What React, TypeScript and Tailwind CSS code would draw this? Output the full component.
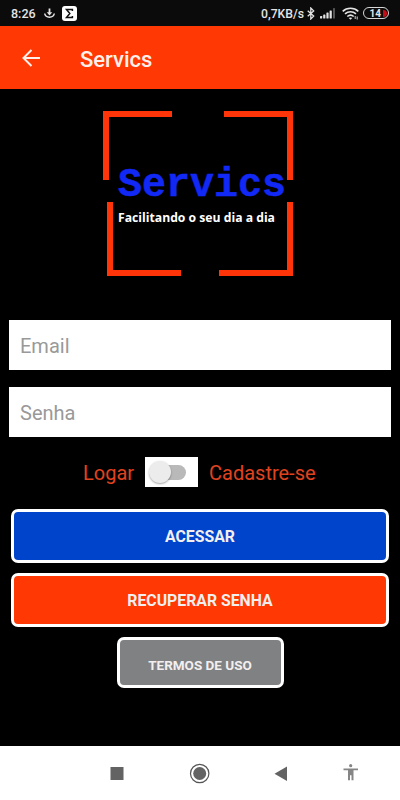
function StatusBar() {
  return (
    <div className="flex h-[26px] items-center justify-between bg-[#0b0b0b] pl-[11px] pr-[11px] text-[#e4e4e4]">
      <div className="flex items-center pt-[2px]">
        <span className="w-[33px] text-[12.5px] font-medium leading-none">8:26</span>
        <svg width="11" height="12" viewBox="0 0 11 12" fill="none" stroke="currentColor">
          <path d="M5.5 0.5v5" strokeWidth="1.8" />
          <path d="M2.7 4.2h5.6L5.5 7.4z" fill="currentColor" stroke="none" />
          <path d="M0.7 5.5c0.8 4.9 8.8 4.9 9.6 0" strokeWidth="1.5" />
        </svg>
        <svg width="15" height="15" viewBox="0 0 15 15" className="-mt-px ml-[7px]">
          <rect width="15" height="15" rx="3" fill="#fff" />
          <path d="M10.4 5.1V3.6H4.5l3.3 3.9-3.3 3.9h5.9V9.9" fill="none" stroke="#111" strokeWidth="1.5" />
        </svg>
      </div>
      <div className="flex items-center pt-px">
        <span className="w-[45px] whitespace-nowrap pt-px text-[12.2px] font-medium leading-none">0,7KB/s</span>
        <svg width="8" height="13" viewBox="0 0 8 13" fill="none" stroke="currentColor" strokeWidth="1.3" className="ml-px">
          <path d="M0.7 3.7l6 5.4L3.8 12V1l2.9 2.9-6 5.4" />
        </svg>
        <svg width="16" height="11" viewBox="0 0 16 11" className="ml-[5px]" fill="currentColor">
          <rect x="0" y="8" width="2.2" height="2.5" rx="0.6" />
          <rect x="3.2" y="6.5" width="2.2" height="4" rx="0.6" />
          <rect x="6.4" y="4.5" width="2.2" height="6" rx="0.6" />
          <rect x="9.6" y="2.5" width="2.2" height="8" rx="0.6" />
          <rect x="13" y="0" width="2" height="10.5" rx="0.6" fill="#555" />
        </svg>
        <svg width="17" height="13" viewBox="0 0 17 13" className="ml-[6px]" fill="none" stroke="currentColor" strokeWidth="1.6">
          <path d="M0.7 4.3c4.3-4 11.3-4 15.6 0" />
          <path d="M3 6.9c3.2-2.8 7.8-2.8 11 0" />
          <path d="M5.3 9.5c1.9-1.6 4.5-1.6 6.4 0" />
          <path d="M6.7 11l1.8 1.8 1.8-1.8c-1.1-.8-2.5-.8-3.6 0z" fill="currentColor" stroke="none" />
          <path d="M13.2 9v3M15.2 9.5v3" strokeWidth="0.9" />
        </svg>
        <div className="ml-[4px] flex h-[12px] w-[26px] items-center justify-end rounded-full border-[1.5px] border-[#d6d6d6] pr-px">
          <span className="mr-[2px] pt-px text-[10px] font-bold leading-none">14</span>
          <span className="h-[7px] w-[4px] rounded-r-full bg-[#c40d16]" />
        </div>
      </div>
    </div>
  )
}

function Header() {
  return (
    <header className="flex h-[63px] items-center bg-[#ff3804] pl-[22px] text-[#fff0eb]">
      <svg width="18" height="18" viewBox="0 0 18 18" fill="none" stroke="currentColor" strokeWidth="2">
        <path d="M18 9H1.7M9.5 1L1.5 9l8 8" />
      </svg>
      <h1 className="ml-[40px] pt-[4px] text-[22px] font-medium leading-none">Servics</h1>
    </header>
  )
}

function Logo() {
  return (
    <div className="relative mx-auto mt-[22px] h-[165px] w-[190px] -translate-x-[2px]">
      <svg width="190" height="165" viewBox="0 0 190 165" className="absolute inset-0" fill="none" stroke="#ff3409" strokeWidth="6">
        <path d="M3 69V3h66M121 3h66v66" />
        <path d="M7 91v71h71M116 162h71V91" />
      </svg>
      <div className="pl-[15px] pt-[53px]">
        <div className="font-['Liberation_Mono',monospace] text-[40px] font-bold leading-[44px] text-[#1229f5] [-webkit-text-stroke:0.5px_#1229f5]">
          Servics
        </div>
        <div className="whitespace-nowrap font-['Open_Sans',sans-serif] text-[12.2px] font-bold leading-[20px] text-white">
          Facilitando o seu dia a dia
        </div>
      </div>
    </div>
  )
}

function NavBar() {
  return (
    <nav className="h-[54px] bg-white">
      <svg width="400" height="54" viewBox="0 0 400 54" fill="#636363">
        <rect x="110.5" y="21" width="13" height="13" />
        <circle cx="199.7" cy="27.5" r="6.5" />
        <circle cx="199.7" cy="27.5" r="9.2" fill="none" stroke="#555" strokeWidth="1.2" />
        <path d="M287 20.5v14.5l-12.5-7.2z" />
        <g fill="#858585">
          <circle cx="350.7" cy="19.7" r="1.6" />
          <path d="M343.5 22.5h14.5v1.8h-4.5v10h-2v-5h-1.5v5h-2v-10h-4.5z" />
        </g>
      </svg>
    </nav>
  )
}

export default function App() {
  return (
    <div className="flex h-[800px] w-[400px] flex-col overflow-hidden bg-black font-[Roboto,sans-serif]">
      <StatusBar />
      <Header />
      <main className="flex flex-1 flex-col">
        <Logo />
        <div className="mt-[44px] flex flex-col gap-[17px] px-[9px]">
          <input
            type="email"
            placeholder="Email"
            className="h-[50px] bg-white px-[11px] pt-px text-[20px] placeholder:text-[#999]"
          />
          <input
            type="password"
            placeholder="Senha"
            className="h-[50px] bg-white px-[11px] pt-px text-[20px] placeholder:text-[#999]"
          />
        </div>
        <div className="mt-[20px] flex h-[30px] items-center pl-[83px] text-[20px] text-[#e0431f]">
          <span className="w-[62px] pt-px">Logar</span>
          <div className="flex h-[30px] w-[53px] items-center bg-white pl-[4px]">
            <div className="flex h-[15px] w-[37px] items-center rounded-full bg-[linear-gradient(to_right,transparent_10px,#b9b9b9_10px)]">
              <div className="size-[22px] shrink-0 rounded-full bg-[#ececec] shadow-[0_1px_2px_rgba(0,0,0,0.35)]" />
            </div>
          </div>
          <span className="ml-[11px] pt-px">Cadastre-se</span>
        </div>
        <div className="mt-[22px] flex flex-col items-center gap-[10px] text-[15.8px] font-bold text-[#f3efef]">
          <button className="h-[54px] w-[378px] rounded-[7px] border-[3px] border-white bg-[#0044cc] pt-[2px]">
            ACESSAR
          </button>
          <button className="h-[54px] w-[378px] rounded-[7px] border-[3px] border-white bg-[#ff3804] pt-[2px]">
            RECUPERAR SENHA
          </button>
          <button className="h-[51px] w-[167px] rounded-[7px] border-[3px] border-white bg-[#808182] pt-[5px] text-[13.5px]">
            TERMOS DE USO
          </button>
        </div>
      </main>
      <NavBar />
    </div>
  )
}
